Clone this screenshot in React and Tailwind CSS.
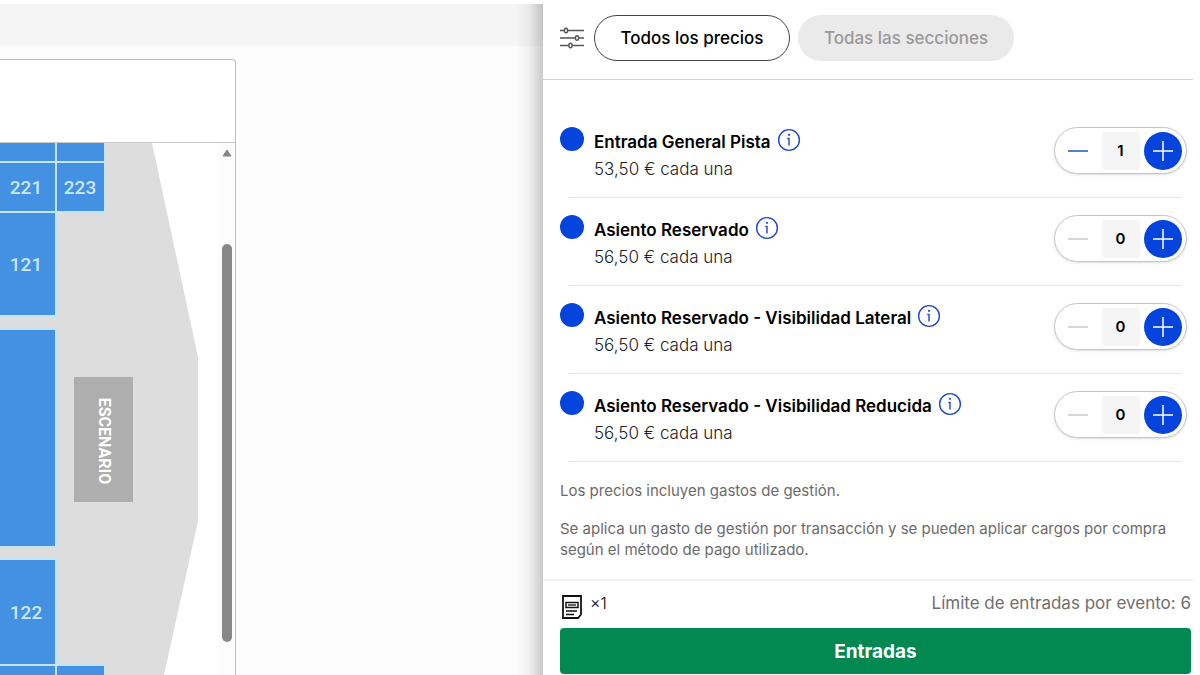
import React, { useState } from "react";

const TICKETS = [
  { id: "pista", name: "Entrada General Pista", price: "53,50 €", initial: 1 },
  { id: "reservado", name: "Asiento Reservado", price: "56,50 €", initial: 0 },
  { id: "lateral", name: "Asiento Reservado - Visibilidad Lateral", price: "56,50 €", initial: 0 },
  { id: "reducida", name: "Asiento Reservado - Visibilidad Reducida", price: "56,50 €", initial: 0 },
];

const MAX_TICKETS = 6;

const FilterIcon = () => (
  <svg width="24" height="24" viewBox="0 0 24 24" fill="none" stroke="#555" strokeWidth="1.4" aria-hidden="true">
    <path d="M0 4.500h4.500M7.500 4.500H24M0 12h15.500M18.500 12H24M0 19.500h9M12 19.500h12" />
    <ellipse cx="6" cy="4.500" rx="1.600" ry="2.200" />
    <ellipse cx="17" cy="12" rx="1.600" ry="2.200" />
    <ellipse cx="10.500" cy="19.500" rx="1.600" ry="2.200" />
  </svg>
);

const InfoIcon = () => (
  <svg width="24" height="24" viewBox="0 0 24 24" fill="none" aria-hidden="true">
    <circle cx="12" cy="12" r="10.400" stroke="#1f48d0" strokeWidth="1.400" />
    <circle cx="12" cy="6.800" r="1.100" fill="#1f48d0" />
    <path d="M10.300 10.500H12v7" stroke="#1f48d0" strokeWidth="1.400" />
  </svg>
);

const TicketIcon = () => (
  <svg width="20" height="24" viewBox="0 0 20 24" fill="none" stroke="#111" aria-hidden="true">
    <path d="M1 1h18v18.500l-3 3.500H1z" strokeWidth="1.800" />
    <rect x="4" y="7.500" width="12" height="5" strokeWidth="1.500" />
    <path d="M6 10h8" stroke="#666" strokeWidth="2" />
    <path d="M4 16h11M4 19.500h8" strokeWidth="1.600" />
  </svg>
);

const SeatMap = () => (
  <svg width="218" height="532" viewBox="0 143 218 532" className="block shrink-0" role="img" aria-label="Plano del recinto">
    <path d="M0 143H152L198 357V521L164 675H0z" fill="#dddddd" />
    <g fill="#4490e3" stroke="#c4e4fb" strokeWidth="2">
      <rect x="-20" y="130" width="76" height="32" />
      <rect x="56" y="130" width="49" height="32" />
      <rect x="-20" y="162" width="76" height="50" />
      <rect x="56" y="162" width="49" height="50" />
      <rect x="-20" y="212" width="76" height="104" />
      <rect x="-20" y="329" width="76" height="218" />
      <rect x="-20" y="559" width="76" height="106" />
      <rect x="-20" y="665" width="76" height="30" />
      <rect x="56" y="665" width="49" height="30" />
    </g>
    <g fill="#c9e9fc" fontFamily="Roboto, sans-serif" fontSize="19" fontWeight="500" textAnchor="middle">
      <text x="26" y="194">221</text>
      <text x="80" y="194">223</text>
      <text x="26" y="271">121</text>
      <text x="26" y="619">122</text>
    </g>
    <rect x="74" y="377" width="59" height="125" fill="#aeaeae" />
    <text
      transform="translate(99 441) rotate(90)"
      fill="#fff"
      fontFamily="Roboto, sans-serif"
      fontSize="16"
      fontWeight="700"
      textAnchor="middle"
    >
      ESCENARIO
    </text>
  </svg>
);

const Stepper = ({ label, value, canAdd, onChange }) => (
  <div className="flex h-[47px] w-[133px] shrink-0 items-center justify-between rounded-full border border-[#c4c4c4] pr-1 pl-2 shadow-sm">
    <button
      type="button"
      aria-label={`Quitar ${label}`}
      disabled={value === 0}
      onClick={() => onChange(value - 1)}
      className="flex h-8 w-[30px] items-center justify-center text-[#2563c4] disabled:text-[#cccccc]"
    >
      <svg width="20" height="20" viewBox="0 0 20 20" stroke="currentColor" strokeWidth="1.600">
        <path d="M0 10h20" />
      </svg>
    </button>
    <input
      type="text"
      inputMode="numeric"
      readOnly
      aria-label={`Cantidad ${label}`}
      value={value}
      className="ml-1 h-[38px] w-[38px] rounded-sm bg-[#f5f5f5] text-center text-[15px] font-semibold text-black outline-none"
    />
    <button
      type="button"
      aria-label={`Añadir ${label}`}
      disabled={!canAdd}
      onClick={() => onChange(value + 1)}
      className="flex h-[38px] w-[38px] items-center justify-center rounded-full bg-[#0544dc] text-white"
    >
      <svg width="20" height="20" viewBox="0 0 20 20" stroke="currentColor" strokeWidth="1.500">
        <path d="M0 10h20M10 0v20" />
      </svg>
    </button>
  </div>
);

const App = () => {
  const [counts, setCounts] = useState(() =>
    Object.fromEntries(TICKETS.map((ticket) => [ticket.id, ticket.initial]))
  );

  const total = Object.values(counts).reduce((sum, n) => sum + n, 0);

  return (
    <div className="flex h-screen overflow-hidden bg-white pt-1 font-['Inter',sans-serif] text-black">
      <main className="relative flex min-w-0 flex-1 flex-col bg-[#fdfdfd]">
        <div className="h-[42px] shrink-0 bg-[#f5f5f5]" />
        <div className="mt-[13px] flex w-[236px] flex-1 flex-col overflow-hidden rounded-tr-sm border-t border-r border-[#bdbdbd] bg-white">
          <div className="h-[83px] shrink-0 border-b border-[#c8c8c8]" />
          <div className="flex min-h-0 flex-1 overflow-hidden">
            <SeatMap />
            <div className="flex flex-1 flex-col items-center bg-[#fcfcfc] pt-1.5">
              <svg width="10" height="8" viewBox="0 0 10 8" fill="#858585" stroke="#858585" strokeLinejoin="round" aria-hidden="true">
                <path d="M5 1L9 7H1z" />
              </svg>
              <div className="mt-[87px] h-[398px] w-2.5 shrink-0 rounded-full bg-[#888888]" />
            </div>
          </div>
        </div>
        {/* shade cast by the ticket panel */}
        <div className="pointer-events-none absolute inset-y-0 right-0 w-7 bg-linear-to-l from-black/20 via-black/5 to-transparent" />
      </main>

      <aside className="mr-[7px] flex w-[650px] shrink-0 flex-col bg-white">
        <header className="flex h-[76px] shrink-0 items-start border-b border-[#cfcfcf] pt-[11px] pl-[17px]">
          <button type="button" aria-label="Filtros" className="flex h-[46px] items-center">
            <FilterIcon />
          </button>
          <button
            type="button"
            className="ml-2.5 h-[46px] w-[196px] rounded-full border border-[#444444] pt-0.5 text-[17px] font-medium"
          >
            Todos los precios
          </button>
          <button
            type="button"
            disabled
            className="ml-2 h-[46px] w-[216px] rounded-full bg-[#eaeaea] pt-0.5 text-[17px] font-medium text-[#999999]"
          >
            Todas las secciones
          </button>
        </header>

        <div className="min-h-0 flex-1 overflow-hidden pt-[30px] pl-[17px]">
          <ul>
            {TICKETS.map((ticket) => (
              <li key={ticket.id}>
                <div className="flex h-[87px] items-start pt-[17px] pr-1.5">
                  <span className="h-6 w-6 shrink-0 rounded-full bg-[#0544dc]" />
                  <div className="ml-2.5 flex-1 pt-[3px]">
                    <div className="flex h-[26px] items-center gap-1.5">
                      <h3 className="text-[17px] font-semibold">{ticket.name}</h3>
                      <button type="button" aria-label={`Información ${ticket.name}`} className="pb-1.5">
                        <InfoIcon />
                      </button>
                    </div>
                    <p className="text-[17px] leading-[26px] font-light text-[#222222]">
                      {ticket.price} cada una
                    </p>
                  </div>
                  <Stepper
                    label={ticket.name}
                    value={counts[ticket.id]}
                    canAdd={total < MAX_TICKETS}
                    onChange={(n) => setCounts((prev) => ({ ...prev, [ticket.id]: n }))}
                  />
                </div>
                <div className="mr-[11px] ml-[9px] h-px bg-[#e6e6e6]" />
              </li>
            ))}
          </ul>

          <div className="mt-[18px] text-[15px] leading-[21px] text-[#6b6b6b]">
            <p>Los precios incluyen gastos de gestión.</p>
            <p className="mt-[17px]">
              Se aplica un gasto de gestión por transacción y se pueden aplicar cargos por compra
              según el método de pago utilizado.
            </p>
          </div>
        </div>

        <footer className="shrink-0 border-t-2 border-[#f2f2f2] pr-0.5 pb-px pl-[17px]">
          <div className="flex h-[47px] items-start justify-between pt-2.5">
            <div className="flex items-start gap-2 pl-0.5">
              <span className="pt-1">
                <TicketIcon />
              </span>
              <span className="text-base font-light">×{total}</span>
            </div>
            <p className="text-[17px] leading-6 text-[#6f6f6f]">
              Límite de entradas por evento: {MAX_TICKETS}
            </p>
          </div>
          <button
            type="button"
            className="block h-[46px] w-full rounded-sm bg-[#028851] pt-0.5 text-[19px] font-bold text-white"
          >
            Entradas
          </button>
        </footer>
      </aside>
    </div>
  );
};

export default App;
